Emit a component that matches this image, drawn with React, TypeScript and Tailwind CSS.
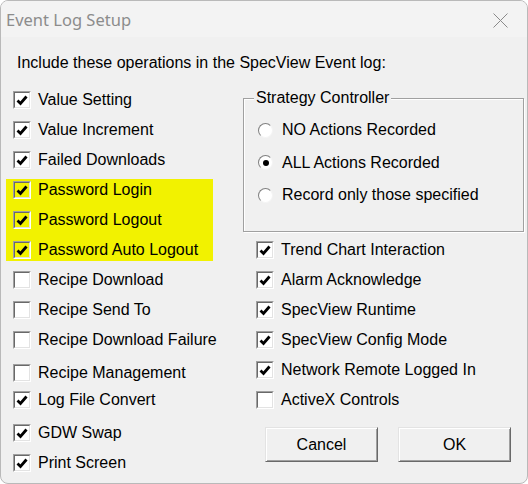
import type { ReactNode } from "react";

type Item = { label: string; checked: boolean };

const highlighted: Item[] = [
  { label: "Password Login", checked: true },
  { label: "Password Logout", checked: true },
  { label: "Password Auto Logout", checked: true },
];

const rightItems: Item[] = [
  { label: "Trend Chart Interaction", checked: true },
  { label: "Alarm Acknowledge", checked: true },
  { label: "SpecView Runtime", checked: true },
  { label: "SpecView Config Mode", checked: true },
  { label: "Network Remote Logged In", checked: true },
  { label: "ActiveX Controls", checked: false },
];

function CheckBox({ checked, yellow }: { checked: boolean; yellow?: boolean }) {
  return (
    <div className="h-[18px] w-[18px] shrink-0 border border-t-[#a0a0a0] border-l-[#a0a0a0] border-r-white border-b-[#ffffff]">
      <div
        className={`flex h-full w-full items-center justify-center border border-t-[#696969] border-l-[#696969] border-r-[#e3e3e3] border-b-[#e3e3e3] ${
          yellow ? "bg-[#f2f200]" : "bg-white"
        }`}
      >
        {checked && (
          <svg width="12" height="12" viewBox="0 0 12 12">
            <path d="M1.5 6.5 L4.5 9.5 L10.5 2.5" fill="none" stroke="#000" strokeWidth="2.8" strokeLinejoin="miter" />
          </svg>
        )}
      </div>
    </div>
  );
}

function CheckRow({ label, checked, yellow, className = "" }: Item & { yellow?: boolean; className?: string }) {
  return (
    <div className={`flex h-[22px] items-center gap-[7px] ${className}`}>
      <CheckBox checked={checked} yellow={yellow} />
      <span className="whitespace-nowrap">{label}</span>
    </div>
  );
}

function Radio({ label, on }: { label: string; on?: boolean }) {
  return (
    <div className="flex h-[22px] items-center gap-[9px]">
      <div className="flex h-[15px] w-[15px] items-center justify-center rounded-full border-[1.5px] border-t-[#808080] border-l-[#808080] border-r-[#f4f4f4] border-b-[#f4f4f4] bg-white">
        {on && <div className="h-[6px] w-[6px] rounded-full bg-black" />}
      </div>
      <span className="whitespace-nowrap">{label}</span>
    </div>
  );
}

function Button({ children }: { children: ReactNode }) {
  return (
    <button
      type="button"
      className="h-[35px] w-[113px] border border-t-[#e3e3e3] border-l-[#e3e3e3] border-r-[#696969] border-b-[#696969] bg-[#f0f0f0] shadow-[inset_1px_1px_0_#fff,inset_-1px_-1px_0_#a0a0a0]"
    >
      {children}
    </button>
  );
}

export default function App() {
  return (
    <div className="h-[484px] w-[528px] bg-white">
      <div className="flex h-full w-full flex-col overflow-hidden rounded-[8px] border border-[#b9b9b9] bg-[#f0f0f0] font-['Liberation_Sans',Arial,sans-serif] text-[16px] leading-[20px] text-black">
        <div className="flex h-[36px] shrink-0 items-center justify-between bg-[#f3f3f3] pt-[2px] pl-[5px] pr-[19px]">
          <span className="font-['Noto_Sans',sans-serif] text-[16.5px] text-[#8c8c8c]">Event Log Setup</span>
          <svg width="15" height="15" viewBox="0 0 15 15">
            <path d="M0.5 0.5 L14.5 14.5 M14.5 0.5 L0.5 14.5" stroke="#8a8a8a" strokeWidth="1" />
          </svg>
        </div>

        <p className="mt-[16px] pl-[16px]">Include these operations in the SpecView Event log:</p>

        <div className="mt-[16px] flex">
          {/* left column */}
          <div className="flex w-[242px] flex-col gap-[8px] pl-[12px]">
            <CheckRow label="Value Setting" checked />
            <CheckRow label="Value Increment" checked />
            <CheckRow label="Failed Downloads" checked />
            <div className="-ml-[7px] flex w-[207px] flex-col gap-[8px] bg-[#f2f200] pl-[7px]">
              {highlighted.map((it) => (
                <CheckRow key={it.label} {...it} yellow />
              ))}
            </div>
            <CheckRow label="Recipe Download" checked={false} />
            <CheckRow label="Recipe Send To" checked={false} />
            <CheckRow label="Recipe Download Failure" checked={false} />
            <CheckRow label="Recipe Management" checked={false} className="mt-[3px]" />
            <CheckRow label="Log File Convert" checked className="-mt-[3px]" />
            <CheckRow label="GDW Swap" checked className="mt-[3px]" />
            <CheckRow label="Print Screen" checked />
          </div>

          {/* right column */}
          <div className="flex flex-col">
            <div className="relative mt-[9px] h-[134px] w-[281px] border border-[#a0a0a0] shadow-[inset_1px_1px_0_#fff,1px_1px_0_#fff]">
              <span className="absolute -top-[11px] left-[10px] bg-[#f0f0f0] px-[2px]">Strategy Controller</span>
              <div className="flex flex-col gap-[10.5px] pt-[20px] pl-[14px]">
                <Radio label="NO Actions Recorded" />
                <Radio label="ALL Actions Recorded" on />
                <Radio label="Record only those specified" />
              </div>
            </div>

            <div className="mt-[7px] flex flex-col gap-[8px] pl-[13px]">
              {rightItems.map((it) => (
                <CheckRow key={it.label} {...it} />
              ))}
            </div>

            <div className="mt-[16px] flex gap-[20px] pl-[22px]">
              <Button>Cancel</Button>
              <Button>OK</Button>
            </div>
          </div>
        </div>
      </div>
    </div>
  );
}
